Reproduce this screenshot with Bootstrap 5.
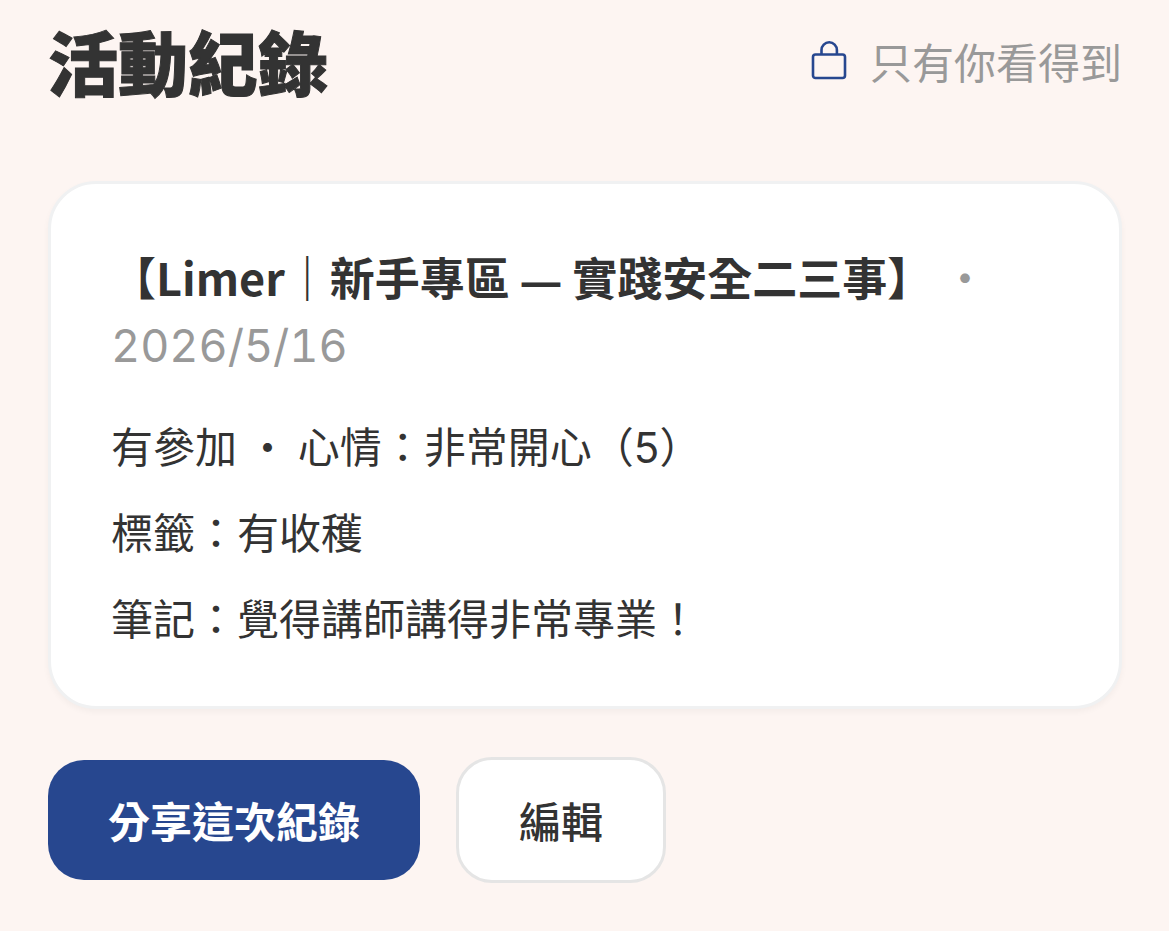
<!DOCTYPE html>
<html lang="zh-Hant">
<head>
<meta charset="utf-8">
<meta name="viewport" content="width=device-width, initial-scale=1">
<title>活動紀錄</title>
<link href="https://cdn.jsdelivr.net/npm/bootstrap@5.3.0/dist/css/bootstrap.min.css" rel="stylesheet">
<style>
body{background:#fdf5f2;color:#333;font-family:"Noto Sans CJK TC",sans-serif;font-size:42px;line-height:64px}
.page{padding:12px 47px 48px 48px}
.page-title{font-size:70px;line-height:98px;font-weight:900;-webkit-text-stroke:1px currentColor}
.muted{color:#999}
.privacy{gap:23px}
.privacy svg{margin-bottom:2px}
.record{border:3px solid #f0f1f2;border-radius:48px;padding:60px 60px 57px;box-shadow:0 3px 6px rgba(0,0,0,.04);color:#333;margin-top:71px}
.record-title{font-size:45px;line-height:66px;font-weight:700}
.dash{font-family:"Noto Sans",sans-serif;font-size:42px;line-height:1}
.record-date{font-size:45px;line-height:66px}
.record-date time{font-family:Inter,sans-serif;line-height:1;font-variant-numeric:tabular-nums}
.digit{font-family:Inter,sans-serif;line-height:1}
.record p{margin:0}
.facts{display:grid;gap:22px;margin-top:37px}
.act{font-size:42px;line-height:64px;border-radius:36px;padding:28px 60px;border:0}
.act-share{background:#27478f;color:#fff;font-weight:700}
.act-edit{background:#fff;color:#333;border:3px solid #e5e5e5;font-weight:500}
.actions{gap:36px;margin-top:48px}
</style>
</head>
<body>
<main class="page">
<header class="d-flex justify-content-between align-items-center">
<h1 class="page-title m-0">活動紀錄</h1>
<div class="privacy d-flex align-items-center muted">
<svg width="36" height="40" viewBox="0 0 36 40" fill="none" stroke="#27478f" stroke-width="2.6" aria-hidden="true"><rect x="2" y="14.5" width="32" height="23.5" rx="2.5"/><path d="M10.500 14.500V10a7.700 7.700 0 0 1 15.400 0v4.500"/></svg>
<span>只有你看得到</span></div>
</header>
<article class="card record">
<div><h2 class="record-title d-inline m-0">【Limer｜新手專區 <span class="dash">—</span> 實踐安全二三事】</h2><span class="record-date muted"> ・ <time datetime="2026-05-16">2026/5/16</time></span></div>
<div class="facts"><p>有參加 ・ 心情：非常開心（<span class="digit">5</span>）</p><p>標籤：有收穫</p><p>筆記：覺得講師講得非常專業！</p></div>
</article>
<div class="actions d-flex align-items-center">
<button type="button" class="btn act act-share">分享這次紀錄</button>
<button type="button" class="btn act act-edit">編輯</button>
</div>
</main>
<script src="https://cdn.jsdelivr.net/npm/bootstrap@5.3.0/dist/js/bootstrap.bundle.min.js"></script>
</body>
</html>
